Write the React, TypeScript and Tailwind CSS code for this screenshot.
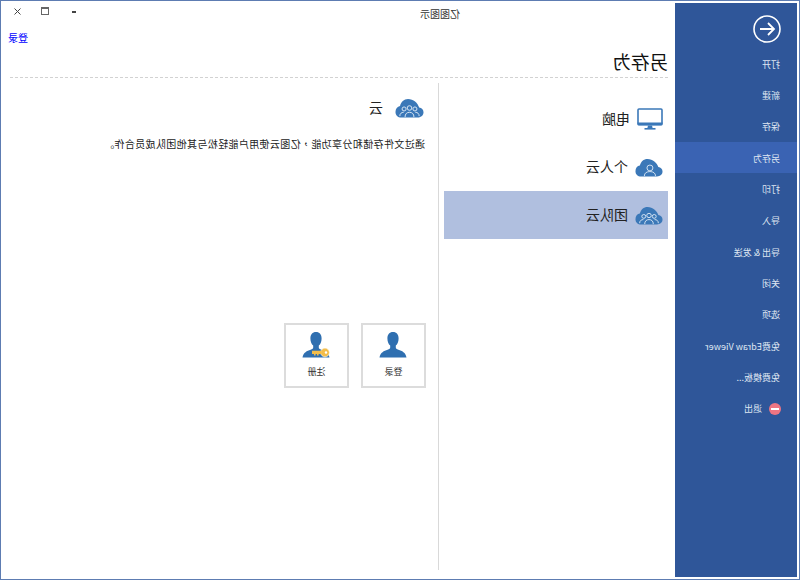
import React from 'react';

const font = { cjk: "font-['Noto_Sans_CJK_SC','Liberation_Sans',sans-serif]" };

const menuItems = ['打开', '新建', '保存', '另存为', '打印', '导入', '导出 & 发送', '关闭', '选项', '免费Edraw Viewer', '免费模板...'];

// cloud outline shared by the two cloud icons
const CloudShape = () => (
    <path d="M6.5 20.5C2.8 20.5 0.5 18 0.5 15C0.5 12.2 2.4 10.4 5 10C6.4 5.2 11 1 16.5 1C20.8 1 23.8 4 24.8 8.4C27.6 8.8 29.5 11.4 29.5 14.6C29.5 18 27 20.5 23.5 20.5Z" fill="#3b78b8" />
);

const TeamCloud = ({ width = 29, height = 20 }: { width?: number; height?: number }) => (
    <svg width={width} height={height} viewBox="0 0 30 21" fill="none" preserveAspectRatio="none" className="shrink-0">
        <CloudShape />
        <g stroke="#dbe8f5" strokeWidth="1" fill="none">
            <circle cx="15" cy="10.5" r="2.4" />
            <circle cx="9.4" cy="11.5" r="2.1" />
            <circle cx="20.6" cy="11.5" r="2.1" />
            <path d="M10.4 20C10.4 16.8 12.2 15 15 15C17.8 15 19.6 16.8 19.6 20" />
            <path d="M5 19C5 16.4 6.6 15 9 15" />
            <path d="M25 19C25 16.4 23.4 15 21 15" />
        </g>
    </svg>
);

const PersonCloud = () => (
    <svg width="28" height="19" viewBox="0 0 30 21" fill="none" preserveAspectRatio="none" className="shrink-0">
        <CloudShape />
        <g stroke="#dbe8f5" strokeWidth="1" fill="none">
            <circle cx="14" cy="11" r="3.2" />
            <path d="M8 20C8 16.6 10.4 15 14 15C17.6 15 20 16.6 20 20" />
        </g>
    </svg>
);

const Monitor = () => (
    <svg width="26" height="22" viewBox="0 0 26 22" fill="none" className="shrink-0">
        <rect x="1" y="1" width="24" height="15.5" rx="1" fill="white" stroke="#3b78b8" strokeWidth="1.6" />
        <path d="M0.5 14.5H25.5V16.5A1 1 0 0 1 24.5 17.5H1.5A1 1 0 0 1 0.5 16.5Z" fill="#3b78b8" />
        <path d="M11 17.5H15L15.6 20H10.4Z" fill="#3b78b8" />
        <rect x="7.5" y="20" width="11" height="1.6" fill="#3b78b8" />
    </svg>
);

const Person = ({ withKey }: { withKey?: boolean }) => (
    <svg width="28" height="28" viewBox="0 0 28 28" fill="none">
        <path d="M14 1C10.4 1 8.4 3.6 8.4 7.4C8.4 10.6 9.6 13.2 11.2 14.6V16.6C11.2 17.6 10.4 18.2 8.6 18.8C5 20 1.4 21.4 0.5 26.5H27.5C26.6 21.4 23 20 19.4 18.8C17.6 18.2 16.8 17.6 16.8 16.6V14.6C18.4 13.2 19.6 10.6 19.6 7.4C19.6 3.6 17.6 1 14 1Z" fill="#2f6fb0" />
        {withKey && (
            <g>
                <circle cx="5" cy="21.5" r="4.4" fill="#f3bd4a" stroke="white" strokeWidth="0.6" />
                <circle cx="4" cy="21.5" r="1.2" fill="white" />
                <path d="M8.5 19.8H18V23H16V24.4H14.4V23H13V24.4H11.4V23H8.5Z" fill="#f3bd4a" />
            </g>
        )}
    </svg>
);

const ActionTile = ({ label, withKey }: { label: string; withKey?: boolean }) => (
    <div className="flex h-[65px] w-[65px] flex-col items-center border-2 border-[#dcdcdc] pt-[6px]">
        <Person withKey={withKey} />
        <span className="mt-[7px] text-[9px] leading-[12px] text-[#333333]">{label}</span>
    </div>
);

// The reference is a horizontally flipped window, so the tree is laid out unflipped and the root is mirrored
export default function App() {
    return (
        <div className={`flex h-[580px] w-[800px] -scale-x-100 border border-[#5d7cb2] bg-white ${font.cjk}`}>
            {/* Side menu */}
            <aside className="mb-[2px] ml-[2px] mt-[2px] flex w-[122px] shrink-0 flex-col bg-[#2f5699] text-[9px] text-[#dfe6f2]">
                <div className="h-[45px] shrink-0 pl-[16px] pt-[12px]">
                    <svg width="28" height="28" viewBox="0 0 28 28" fill="none" stroke="white">
                        <circle cx="14" cy="14" r="13" strokeWidth="1.6" />
                        <path d="M21 14H7.5M13 8L7 14L13 20" strokeWidth="1.8" />
                    </svg>
                </div>
                {menuItems.map((item) => (
                    <div
                        key={item}
                        className={`flex h-[31.3px] items-center pl-[17px] pt-[2px] ${item === '另存为' ? 'bg-[#3a63b3]' : ''}`}
                    >
                        {item}
                    </div>
                ))}
                <div className="flex h-[31.3px] items-center pl-[16px] pt-[2px]">
                    <span className="relative mr-[7px] h-[12px] w-[12px] rounded-full bg-[#ee7583]">
                        <span className="absolute left-[2px] top-[5px] h-[2px] w-[8px] bg-white" />
                    </span>
                    退出
                </div>
            </aside>

            {/* Main content */}
            <main className="flex min-w-0 flex-1 flex-col pl-[7px] pr-[9px]">
                <div className="relative h-[26px] shrink-0">
                    <div className="ml-[208px] w-[40px] whitespace-nowrap pt-[7px] text-center text-[10px] leading-[12px] text-[#333333]">亿图图示</div>
                    <div className="absolute right-[-9px] top-[6px] flex items-center text-[#444444]">
                        <span className="mt-[2px] h-[2px] w-[4px] bg-[#444444]" />
                        <svg width="8" height="8" viewBox="0 0 8 8" className="ml-[23px]" fill="none" stroke="#666666">
                            <rect x="0.5" y="0.5" width="7" height="7" />
                            <path d="M0.5 1.5H7.5" />
                        </svg>
                        <svg width="7" height="7" viewBox="0 0 7 7" className="ml-[20px] mr-[13px]" fill="none" stroke="#444444">
                            <path d="M0.5 0.5L6.5 6.5M6.5 0.5L0.5 6.5" />
                        </svg>
                    </div>
                </div>
                <div className="-mr-[2px] flex h-[20px] shrink-0 items-center justify-end text-[10px] text-[#0000ff]">登录</div>
                <div className="flex h-[31px] shrink-0 items-start border-b border-dashed border-[#d2d2d2] pt-[2px] text-[18.5px] leading-[24px] text-[#111111]">
                    另存为
                </div>

                <div className="mb-[9px] flex min-h-0 flex-1">
                    {/* Save targets */}
                    <div className="mt-[5px] flex w-[230px] shrink-0 flex-col border-r border-[#d9d9d9] pr-[5px] pt-[12px]">
                        <div className="flex h-[48px] items-center gap-[7px] pl-[5px] text-[14px] text-[#222222]">
                            <Monitor />
                            <span className="pb-[2px]">电脑</span>
                        </div>
                        <div className="flex h-[48px] items-center gap-[7px] pl-[5px] text-[14px] text-[#222222]">
                            <PersonCloud />
                            <span className="pb-[2px]">个人云</span>
                        </div>
                        <div className="flex h-[48px] items-center gap-[7px] bg-[#b0bfdf] pl-[5px] text-[14px] text-[#222222]">
                            <TeamCloud width={28} height={19} />
                            <span className="pb-[2px]">团队云</span>
                        </div>
                    </div>

                    {/* Cloud details */}
                    <div className="flex min-w-0 flex-1 flex-col pl-[13px] pt-[19px]">
                        <div className="ml-[1px] flex items-center gap-[12px] text-[14px] leading-[21px] text-[#222222]">
                            <TeamCloud />
                            云
                        </div>
                        <p className="mt-[19px] whitespace-nowrap text-[10px] leading-[14px] tracking-[0.36px] text-[#222222]">
                            通过文件存储和分享功能<span className="font-['Noto_Sans_CJK_TC',sans-serif]">，</span>亿图云使用户能轻松与其他团队成员合作。
                        </p>
                        <div className="-ml-[1px] mt-[172px] flex gap-[12px]">
                            <ActionTile label="登录" />
                            <ActionTile label="注册" withKey />
                        </div>
                    </div>
                </div>
            </main>
        </div>
    );
}
